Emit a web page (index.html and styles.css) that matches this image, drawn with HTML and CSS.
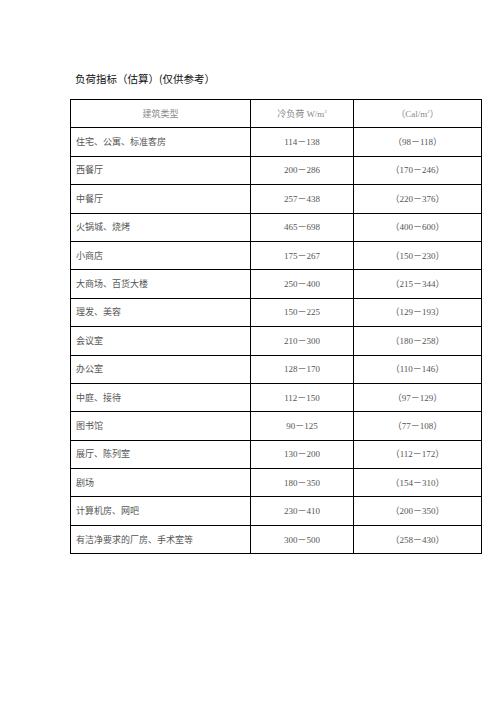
FILE: index.html
```html
<!DOCTYPE html>
<html lang="zh-CN">
<head>
<meta charset="utf-8">
<title>负荷指标</title>
<link rel="stylesheet" href="styles.css">
</head>
<body>
<div class="page">
  <h1 class="title">负荷指标（估算）(仅供参考）</h1>
  <table class="load">
    <colgroup>
      <col class="c1"><col class="c2"><col class="c3">
    </colgroup>
    <tr class="head">
      <td class="center">建筑类型</td>
      <td class="center">冷负荷 W/m<sup>2</sup></td>
      <td class="center">（Cal/m<sup>2</sup>）</td>
    </tr>
    <tr><td>住宅、公寓、标准客房</td><td class="center">114－138</td><td class="center">（98－118）</td></tr>
    <tr><td>西餐厅</td><td class="center">200－286</td><td class="center">（170－246）</td></tr>
    <tr><td>中餐厅</td><td class="center">257－438</td><td class="center">（220－376）</td></tr>
    <tr><td>火锅城、烧烤</td><td class="center">465－698</td><td class="center">（400－600）</td></tr>
    <tr><td>小商店</td><td class="center">175－267</td><td class="center">（150－230）</td></tr>
    <tr><td>大商场、百货大楼</td><td class="center">250－400</td><td class="center">（215－344）</td></tr>
    <tr><td>理发、美容</td><td class="center">150－225</td><td class="center">（129－193）</td></tr>
    <tr><td>会议室</td><td class="center">210－300</td><td class="center">（180－258）</td></tr>
    <tr><td>办公室</td><td class="center">128－170</td><td class="center">（110－146）</td></tr>
    <tr><td>中庭、接待</td><td class="center">112－150</td><td class="center">（97－129）</td></tr>
    <tr><td>图书馆</td><td class="center">90－125</td><td class="center">（77－108）</td></tr>
    <tr><td>展厅、陈列室</td><td class="center">130－200</td><td class="center">（112－172）</td></tr>
    <tr><td>剧场</td><td class="center">180－350</td><td class="center">（154－310）</td></tr>
    <tr><td>计算机房、网吧</td><td class="center">230－410</td><td class="center">（200－350）</td></tr>
    <tr><td>有洁净要求的厂房、手术室等</td><td class="center">300－500</td><td class="center">（258－430）</td></tr>
  </table>
</div>
</body>
</html>
```
FILE: styles.css
```css
html, body {
  margin: 0;
  padding: 0;
  background: #ffffff;
}

.page {
  padding: 72px 0 0 70px;
}

.title {
  margin: 0 0 13px 0;
  padding-left: 5px;
  font-family: "Noto Sans CJK SC", "Noto Sans", sans-serif;
  font-size: 10.5px;
  font-weight: normal;
  line-height: 14px;
  color: #111111;
}

.load {
  border-collapse: collapse;
  width: 411px;
  table-layout: fixed;
  border: 1px solid #000000;
}

.c1 { width: 180px; }
.c2 { width: 103px; }
.c3 { width: 128px; }

.load tr {
  height: 28.4px;
}

.load td {
  border: 1px solid #000000;
  padding: 0 0 0 5px;
  font-family: "Liberation Serif", "Noto Sans CJK SC", serif;
  font-size: 9px;
  line-height: 12px;
  color: #555555;
  vertical-align: middle;
  white-space: nowrap;
}

.load td.center {
  text-align: center;
  padding: 0;
}

.load .head td {
  color: #888888;
}

.load sup {
  font-size: 5px;
  line-height: 0;
  vertical-align: 4px;
}
```
